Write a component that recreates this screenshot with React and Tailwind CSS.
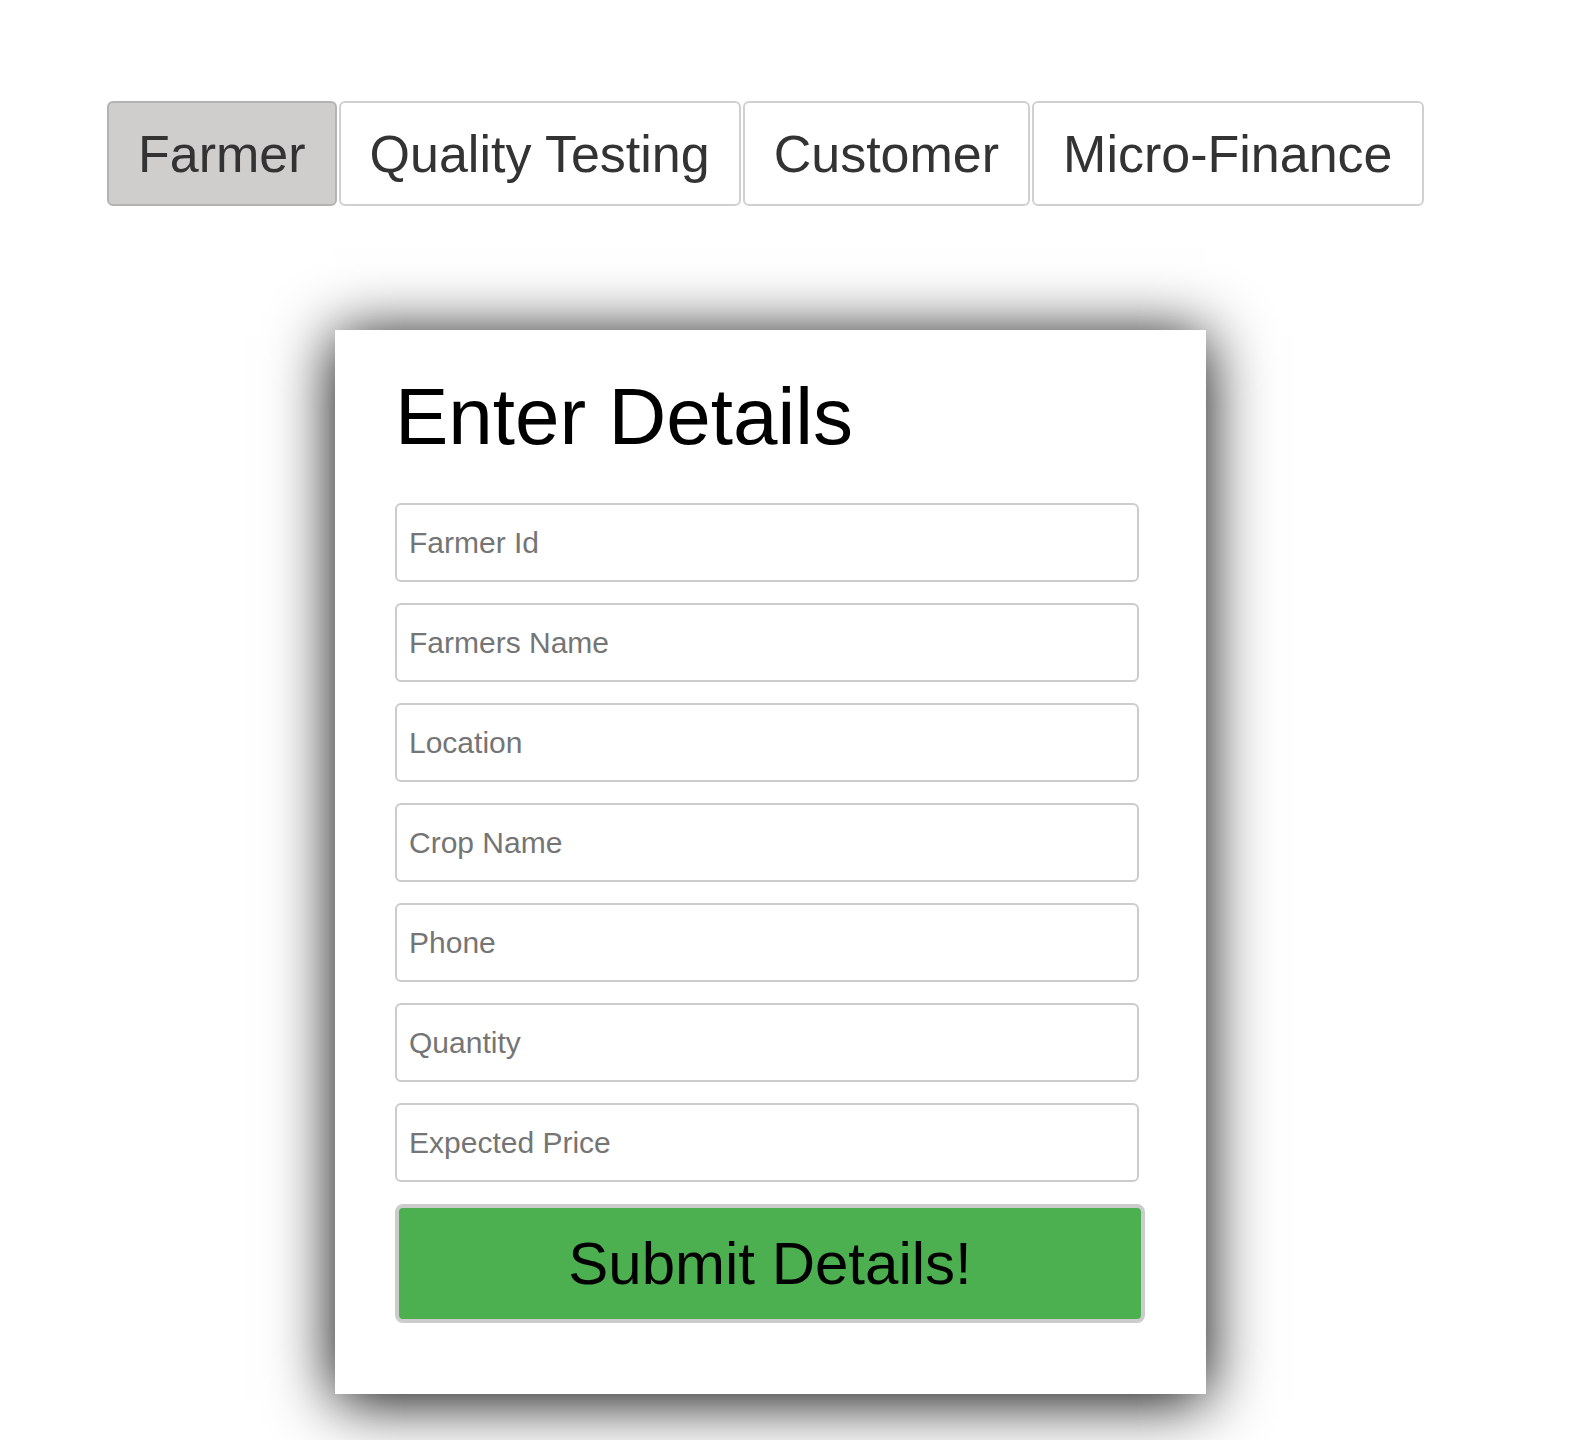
import React, { useState } from "react";

const tabs = ["Farmer", "Quality Testing", "Customer", "Micro-Finance"];

const fields = [
    "Farmer Id",
    "Farmers Name",
    "Location",
    "Crop Name",
    "Phone",
    "Quantity",
    "Expected Price",
];

const App = () => {
    const [active, setActive] = useState("Farmer");
    const [values, setValues] = useState({});

    return (
        <div className="min-h-screen bg-white pl-[107px] pt-[101px] font-['Liberation_Sans',Arial,sans-serif]">
            {/* tab bar */}
            <div className="flex gap-[2px]">
                {tabs.map((tab) => (
                    <button
                        key={tab}
                        onClick={() => setActive(tab)}
                        className={
                            active === tab
                                ? "h-[105px] px-[29px] rounded-md border-2 border-[#b3b3b3] bg-[#cfcecd] text-[52px] text-[#333]"
                                : "h-[105px] px-[29px] rounded-md border-2 border-[#d0d0d0] bg-white text-[52px] text-[#333]"
                        }
                    >
                        {tab}
                    </button>
                ))}
            </div>

            {/* form card */}
            <div className="ml-[228px] mt-[124px] w-[871px] bg-white pl-[60px] pt-[41px] pb-[71px] shadow-[0_6px_60px_rgba(0,0,0,1)]">
                <h1 className="mb-[40px] text-[80px] leading-[92px] text-black">
                    Enter Details
                </h1>
                <div className="flex flex-col gap-[21px]">
                    {fields.map((field) => (
                        <input
                            key={field}
                            type="text"
                            placeholder={field}
                            value={values[field] || ""}
                            onChange={(e) =>
                                setValues({ ...values, [field]: e.target.value })
                            }
                            className="h-[79px] w-[744px] rounded-md border-2 border-[#cccccc] px-[12px] text-[30px] text-black outline-none placeholder:text-[#757575]"
                        />
                    ))}
                </div>
                <button className="mt-[22px] h-[119px] w-[750px] rounded-lg border-4 border-[#cccccc] bg-[#4caf50] text-[60px] text-black">
                    Submit Details!
                </button>
            </div>
        </div>
    );
};

export default App;
